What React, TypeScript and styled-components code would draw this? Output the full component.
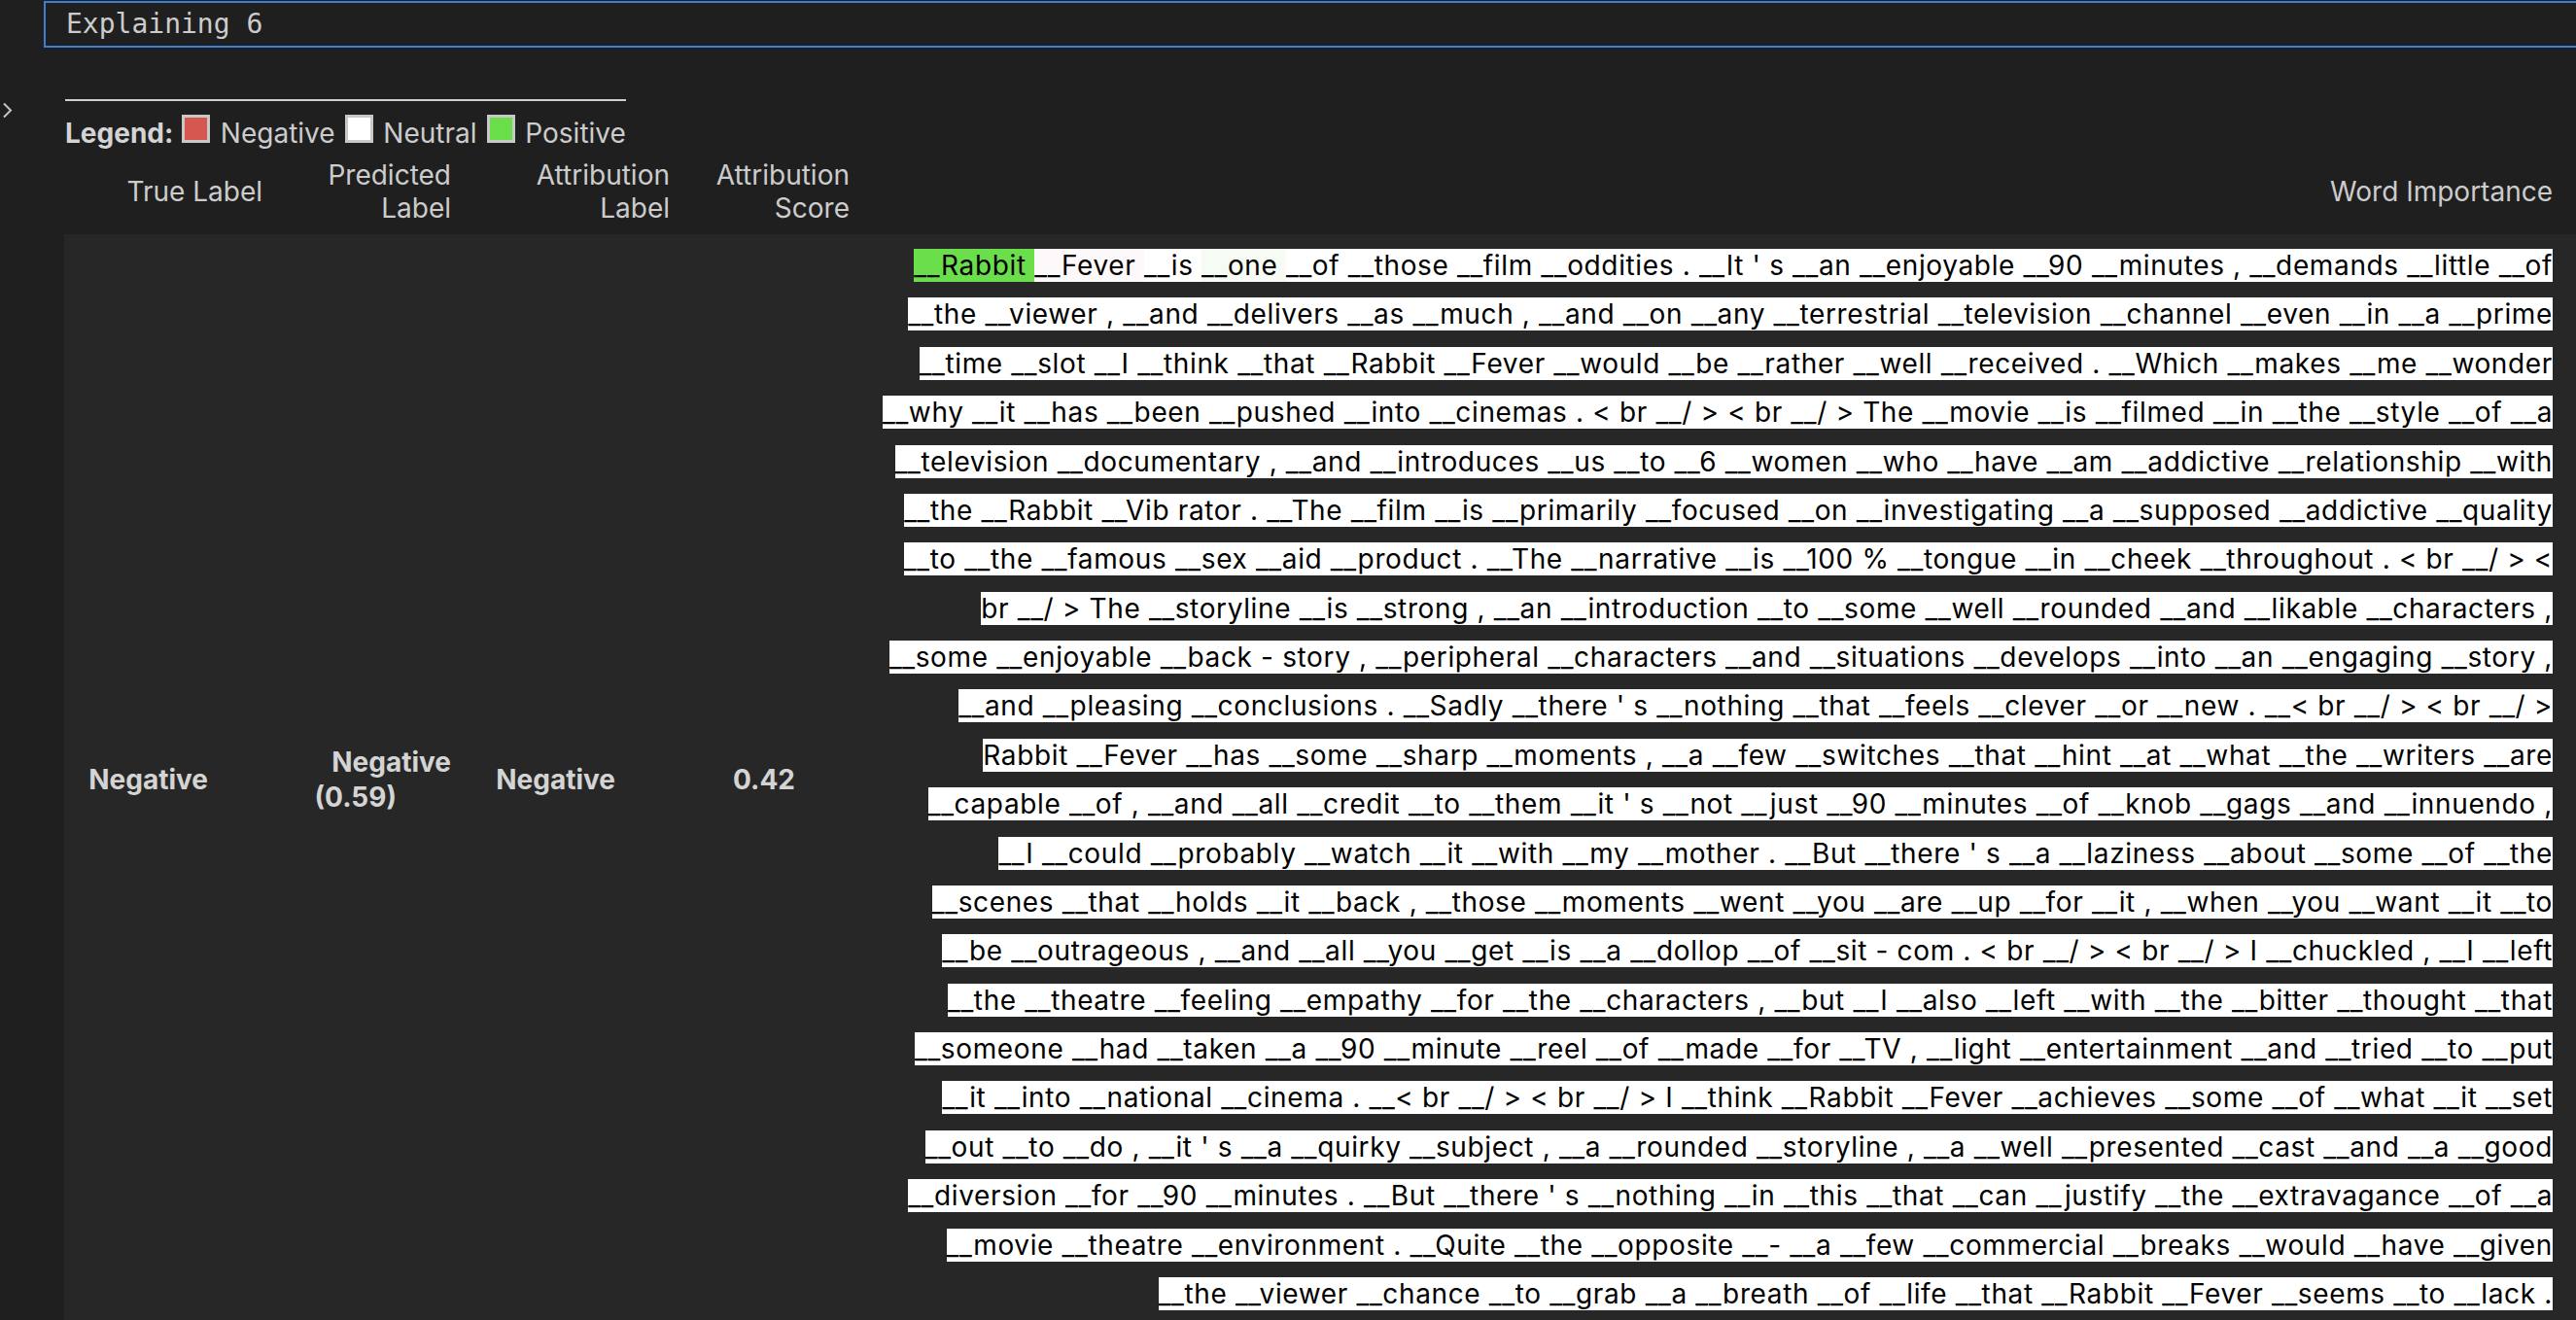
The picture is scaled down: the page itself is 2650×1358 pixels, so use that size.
import React from "react";
import styled, { createGlobalStyle } from "styled-components";

const GlobalStyle = createGlobalStyle`
  html, body {
    margin: 0;
    padding: 0;
    background: #1f1f1f;
    overflow: hidden;
  }
  body {
    font-family: Inter, "Liberation Sans", sans-serif;
    color: #cccccc;
  }
`;

const Page = styled.div`
  width: 2650px;
  height: 1358px;
  overflow: hidden;
  box-sizing: border-box;
  padding-top: 1px;
`;

const OutputBox = styled.div`
  margin-left: 45px;
  margin-right: -20px;
  height: 48px;
  box-sizing: border-box;
  border: 2px solid #3a7fd4;
  border-right: none;
  padding-left: 21px;
  font-family: "DejaVu Sans Mono", monospace;
  font-size: 28px;
  line-height: 44px;
  color: #cccccc;
  white-space: pre;
`;

const OutputArea = styled.div`
  display: flex;
  align-items: flex-start;
`;

const Gutter = styled.div`
  width: 66px;
  flex: none;
  padding-top: 56px;
  padding-left: 2px;
  box-sizing: border-box;
`;

const Content = styled.div`
  flex: 1;
  min-width: 0;
`;

const Legend = styled.div`
  width: fit-content;
  margin-top: 53px;
  margin-left: 1px;
  border-top: 2px solid #cfcfcf;
  padding-top: 14px;
  font-size: 28px;
  line-height: 34px;
  word-spacing: 2.5px;
  color: #cccccc;
  white-space: nowrap;
`;

const LegendTitle = styled.b`
  font-weight: 700;
  color: #d4d4d4;
`;

const Swatch = styled.span<{ $c: string }>`
  display: inline-block;
  width: 23px;
  height: 23px;
  border: 3px solid #c8c8c8;
  background: ${(p) => p.$c};
`;

const COLS = "204px 194px 225px 185px 1752px";

const HeaderRow = styled.div`
  display: grid;
  grid-template-columns: ${COLS};
  padding-right: 24px;
  height: 87px;
  align-items: center;
`;

const HeaderCell = styled.div`
  text-align: right;
  font-size: 28px;
  line-height: 33.3px;
  color: #cccccc;
`;

const DataRow = styled.div`
  display: grid;
  grid-template-columns: ${COLS};
  padding: 7px 24px 9px 0;
  background: #272727;
`;

const LabelCell = styled.div`
  align-self: center;
  text-align: right;
  font-size: 28px;
  line-height: 36px;
  font-weight: 700;
  color: #d4d4d4;
`;

const LabelText = styled.span`
  padding-right: 2em;
`;

const WordCell = styled.div`
  text-align: right;
  font-size: 28px;
  line-height: 50.38px;
  letter-spacing: 0.64px;
  color: #000000;
`;

const TokenLine = styled.div`
  white-space: nowrap;
`;

const Token = styled.span<{ $bg: string }>`
  background-color: ${(p) => p.$bg};
  color: #000000;
`;

const LINES: string[] = [
  "__Rabbit __Fever __is __one __of __those __film __oddities . __It ' s __an __enjoyable __90 __minutes , __demands __little __of",
  "__the __viewer , __and __delivers __as __much , __and __on __any __terrestrial __television __channel __even __in __a __prime",
  "__time __slot __I __think __that __Rabbit __Fever __would __be __rather __well __received . __Which __makes __me __wonder",
  "__why __it __has __been __pushed __into __cinemas . < br __/ > < br __/ > The __movie __is __filmed __in __the __style __of __a",
  "__television __documentary , __and __introduces __us __to __6 __women __who __have __am __addictive __relationship __with",
  "__the __Rabbit __Vib rator . __The __film __is __primarily __focused __on __investigating __a __supposed __addictive __quality",
  "__to __the __famous __sex __aid __product . __The __narrative __is __100 % __tongue __in __cheek __throughout . < br __/ > <",
  "br __/ > The __storyline __is __strong , __an __introduction __to __some __well __rounded __and __likable __characters ,",
  "__some __enjoyable __back - story , __peripheral __characters __and __situations __develops __into __an __engaging __story ,",
  "__and __pleasing __conclusions . __Sadly __there ' s __nothing __that __feels __clever __or __new . __< br __/ > < br __/ >",
  "Rabbit __Fever __has __some __sharp __moments , __a __few __switches __that __hint __at __what __the __writers __are",
  "__capable __of , __and __all __credit __to __them __it ' s __not __just __90 __minutes __of __knob __gags __and __innuendo ,",
  "__I __could __probably __watch __it __with __my __mother . __But __there ' s __a __laziness __about __some __of __the",
  "__scenes __that __holds __it __back , __those __moments __went __you __are __up __for __it , __when __you __want __it __to",
  "__be __outrageous , __and __all __you __get __is __a __dollop __of __sit - com . < br __/ > < br __/ > I __chuckled , __I __left",
  "__the __theatre __feeling __empathy __for __the __characters , __but __I __also __left __with __the __bitter __thought __that",
  "__someone __had __taken __a __90 __minute __reel __of __made __for __TV , __light __entertainment __and __tried __to __put",
  "__it __into __national __cinema . __< br __/ > < br __/ > I __think __Rabbit __Fever __achieves __some __of __what __it __set",
  "__out __to __do , __it ' s __a __quirky __subject , __a __rounded __storyline , __a __well __presented __cast __and __a __good",
  "__diversion __for __90 __minutes . __But __there ' s __nothing __in __this __that __can __justify __the __extravagance __of __a",
  "__movie __theatre __environment . __Quite __the __opposite __- __a __few __commercial __breaks __would __have __given",
  "__the __viewer __chance __to __grab __a __breath __of __life __that __Rabbit __Fever __seems __to __lack .",
];

const TINTS: Record<string, string> = {
  "0-0": "#6ade4b",
  "0-1": "#fdf8f9",
  "0-3": "#f6fbf4",
};

const Chevron = () => (
  <svg width="11" height="17" viewBox="0 0 11 17" fill="none">
    <path d="M2 1.5 L9 8.5 L2 15.5" stroke="#c5c5c5" strokeWidth="2" />
  </svg>
);

export default function App() {
  return (
    <>
      <GlobalStyle />
      <Page>
        <OutputBox>Explaining 6</OutputBox>
        <OutputArea>
          <Gutter>
            <Chevron />
          </Gutter>
          <Content>
            <Legend>
              <LegendTitle>Legend: </LegendTitle>
              <Swatch $c="#d65650" /> Negative <Swatch $c="#ffffff" /> Neutral{" "}
              <Swatch $c="#6ade4b" /> Positive
            </Legend>
            <HeaderRow>
              <HeaderCell>True Label</HeaderCell>
              <HeaderCell>
                Predicted
                <br />
                Label
              </HeaderCell>
              <HeaderCell>
                Attribution
                <br />
                Label
              </HeaderCell>
              <HeaderCell>
                Attribution
                <br />
                Score
              </HeaderCell>
              <HeaderCell>Word Importance</HeaderCell>
            </HeaderRow>
            <DataRow>
              <LabelCell>
                <LabelText>Negative</LabelText>
              </LabelCell>
              <LabelCell>
                <LabelText>
                  Negative
                  <br />
                  (0.59)
                </LabelText>
              </LabelCell>
              <LabelCell>
                <LabelText>Negative</LabelText>
              </LabelCell>
              <LabelCell>
                <LabelText>0.42</LabelText>
              </LabelCell>
              <WordCell>
                {LINES.map((line, li) => (
                  <TokenLine key={li}>
                    {line.split(" ").map((tok, ti) => (
                      <Token key={ti} $bg={TINTS[`${li}-${ti}`] ?? "#ffffff"}>
                        {tok + " "}
                      </Token>
                    ))}
                  </TokenLine>
                ))}
              </WordCell>
            </DataRow>
          </Content>
        </OutputArea>
      </Page>
    </>
  );
}
